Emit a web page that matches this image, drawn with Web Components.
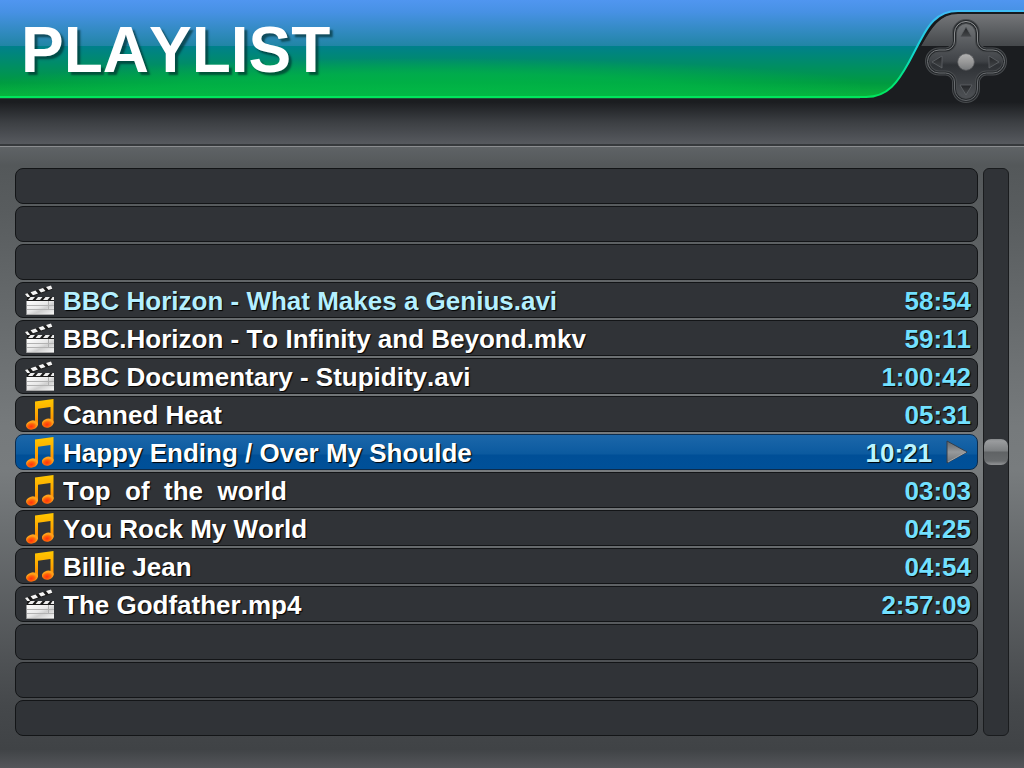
<!DOCTYPE html>
<html lang="en">
<head>
<meta charset="utf-8">
<title>Playlist</title>
<style>
html, body { height: 100%; }
body { margin: 0; background: #53575a; font-family: "Liberation Sans", Arial, sans-serif; }
</style>
</head>
<body>
<playlist-app></playlist-app>
<script>
const PAD = "M94.5 33A11.5 11.5 0 0 1 117.5 33V41A9 9 0 0 0 126.5 50H133A11.5 11.5 0 0 1 133 73H126.5A9 9 0 0 0 117.5 82V89A11.500 11.500 0 0 1 94.5 89V82A9 9 0 0 0 85.5 73H79A11.5 11.5 0 0 1 79 50H85.5A9 9 0 0 0 94.5 41Z";
const CURVE = "C28 97 38 82 49 62L59 43C66 30 74 11 98 11";

class DirectionPad extends HTMLElement {
  constructor() {
    super();
    this.attachShadow({ mode: "open" }).innerHTML = `
<style>:host{display:block;width:164px;height:108px} svg{display:block}</style>
<svg width="164" height="108" viewBox="0 0 164 108" aria-hidden="true">
  <defs>
    <linearGradient id="band" gradientUnits="userSpaceOnUse" x1="0" y1="0" x2="0" y2="98">
      <stop offset="0" stop-color="#5096f0"/><stop offset=".12" stop-color="#4791e4"/><stop offset=".47" stop-color="#2185a5"/>
      <stop offset=".47" stop-color="#00808c"/><stop offset=".85" stop-color="#009a40"/><stop offset="1" stop-color="#0bb63a"/>
    </linearGradient>
    <linearGradient id="edge" gradientUnits="userSpaceOnUse" x1="0" y1="12" x2="0" y2="97">
      <stop offset="0" stop-color="#3fbcf5"/><stop offset=".45" stop-color="#14d5d5"/><stop offset=".8" stop-color="#00e67a"/><stop offset="1" stop-color="#00e65c"/>
    </linearGradient>
    <linearGradient id="gloss" gradientUnits="userSpaceOnUse" x1="0" y1="12" x2="0" y2="46">
      <stop offset="0" stop-color="#77797c"/><stop offset="1" stop-color="#45484b"/>
    </linearGradient>
    <linearGradient id="pad" x1="0" y1="0" x2="0" y2="1">
      <stop offset="0" stop-color="#74777a"/><stop offset=".5" stop-color="#404347"/><stop offset=".55" stop-color="#2e3135"/><stop offset="1" stop-color="#505357"/>
    </linearGradient>
    <linearGradient id="ball" x1="0" y1="0" x2="0" y2="1"><stop offset="0" stop-color="#b2b2b2"/><stop offset=".5" stop-color="#989898"/><stop offset="1" stop-color="#77797b"/></linearGradient>
    <linearGradient id="rim" x1="0" y1="0" x2="0" y2="1"><stop offset="0" stop-color="#97999b"/><stop offset=".5" stop-color="#707376"/><stop offset="1" stop-color="#63666a"/></linearGradient>
    <linearGradient id="tri" x1="0" y1="0" x2="0" y2="1"><stop offset="0" stop-color="#222427"/><stop offset="1" stop-color="#45484b"/></linearGradient>
  </defs>
  <path d="M164 0H0V97H6${CURVE}H164Z" fill="url(#band)"/>
  <path d="M164 13H98C80 13 70 30 61 46H164Z" fill="url(#gloss)"/>
  <path d="M164 13H98C78 13 70 28 60 46" fill="none" stroke="#17191c" stroke-width="2"/>
  <path d="M0 97H6${CURVE}H164" fill="none" stroke="url(#edge)" stroke-width="2"/>
  <path d="${PAD}" fill="url(#pad)" stroke="#484b4e" stroke-width="5"/>
  <path d="${PAD}" fill="none" stroke="#25282b" stroke-width="3"/>
  <path d="${PAD}" fill="none" stroke="url(#rim)" stroke-width="1"/>
  <g fill="url(#tri)" stroke="#606367" stroke-width=".8">
    <path d="M106 27L112 37H100Z"/><path d="M106 95L100 85H112Z"/><path d="M72 62L82 56V68Z"/><path d="M139 62L129 56V68Z"/>
  </g>
  <circle cx="106" cy="62" r="8.300" fill="url(#ball)" stroke="#5a5c5f" stroke-width=".7"/>
</svg>`;
  }
}
customElements.define("direction-pad", DirectionPad);

class MediaHeader extends HTMLElement {
  constructor() {
    super();
    this.attachShadow({ mode: "open" }).innerHTML = `
<style>
:host{display:block}
header{display:flex;height:144px;background:linear-gradient(#1b1d20 0,#1b1d20 102px,#3c3f43 122px,#575a5f 144px);border-bottom:2px solid #36393c}
.band{flex:1;box-sizing:border-box;height:98px;padding:18px 22px 0 21px;border-bottom:2px solid #00e65c;box-shadow:0 1px #1d4a33;
 background:radial-gradient(ellipse 56% 38px at 50% 100%,#00ba48cc,#00ba4899 60%,#00ba4800),linear-gradient(#5096f0 0,#4791e4 12px,#2185a5 46px,#00808c 46px,#009a40 83px,#0bb63a 98px)}
h1{margin:0;font-size:64px;line-height:64px;font-kerning:none;color:#fff;text-shadow:3px 3px 2px rgba(0,45,45,.65)}
</style>
<header><div class="band"><h1><slot></slot></h1></div><direction-pad></direction-pad></header>`;
  }
}
customElements.define("media-header", MediaHeader);

const ICONS = {
  video: `<svg width="30" height="32" viewBox="0 0 30 32"><defs><linearGradient id="v" x1="0" y1="0" x2="1" y2="1"><stop offset="0" stop-color="#fff"/><stop offset=".45" stop-color="#e8e8e8"/><stop offset=".6" stop-color="#cfcfcf"/><stop offset="1" stop-color="#fafafa"/></linearGradient></defs>
   <path d="M0 10L26 1.500L27.500 5.500L3 14Z" fill="#1b1b1b"/>
   <path d="M5.500 8.200L10.500 6.500L13 9.500L8 11.300ZM13.500 5.600L18 4.100L20.500 7L16 8.600ZM21 3.100L26 1.500L27.300 4.800L23.500 6.100ZM0 10L2.500 9.200L5 12.600L3 14Z" fill="#f4f4f4"/>
   <rect x="2" y="13" width="27" height="5" fill="#1b1b1b"/>
   <path d="M5.500 13H10L7.500 16H3ZM13 13H17.500L15 16H10.500ZM20.500 13H25L22.500 16H18ZM27.500 13H29V16H25.500Z" fill="#eee"/>
   <rect x="1.500" y="17" width="27.500" height="14" fill="url(#v)"/>
   <path d="M2 21.500H29M23.500 17V25.500M2 25.500H29" stroke="#b2b2b2" fill="none"/><path d="M2 30.500H29" stroke="#aaa"/></svg>`,
  music: `<svg width="30" height="32" viewBox="0 0 30 32"><defs><linearGradient id="m" x1="0" y1="0" x2="0" y2="1"><stop offset="0" stop-color="#ffc800"/><stop offset=".5" stop-color="#ffab00"/><stop offset="1" stop-color="#ff8500"/></linearGradient><radialGradient id="n" cx=".4" cy=".65"><stop offset="0" stop-color="#ff3210"/><stop offset=".6" stop-color="#ff6508"/><stop offset="1" stop-color="#ffa21a"/></radialGradient></defs>
   <path d="M10 3.500L28.500 1V25H25.500V9L13 10.800V27H10Z" fill="url(#m)"/>
   <ellipse cx="7" cy="27" rx="6" ry="4.500" transform="rotate(-15 7 27)" fill="url(#n)"/>
   <ellipse cx="22.800" cy="25" rx="6" ry="4.500" transform="rotate(-15 23 25)" fill="url(#n)"/></svg>`
};

class PlaylistItem extends HTMLElement {
  connectedCallback() {
    const kind = this.getAttribute("kind");
    const playing = this.hasAttribute("selected");
    this.attachShadow({ mode: "open" }).innerHTML = `
<style>
:host{display:flex;align-items:center;box-sizing:border-box;height:36px;padding:0 6px 0 9px;border:1px solid #131517;border-radius:8px;
 background:#303337;color:#fff;font-weight:bold;font-size:26px;line-height:30px;font-kerning:none;text-shadow:1px 1px 1px #000}
:host([recent]){color:#b4f0ff}
:host([selected]){background:linear-gradient(#1c67aa 0,#0b5a9f 19px,#004f97 20px,#005098 100%);border-color:#0d2c4c}
.icon{flex:none;width:30px;height:32px;margin-right:8px}
.icon svg,.play{display:block}
.title,time{padding-top:2px}
.title{flex:1;min-width:0;white-space:pre;overflow:hidden}
time{color:#72e0ff}
:host([selected]) time{color:#b9f4ff}
.play{margin:0 3px 0 14px}
</style>
${kind ? `<span class="icon">${ICONS[kind]}</span><span class="title"><slot></slot></span><time>${this.getAttribute("length")}</time>` : ""}
${playing ? `<svg class="play" width="22" height="24" viewBox="0 0 22 24"><defs><linearGradient id="p" x1="0" y1="0" x2="0" y2="1"><stop offset="0" stop-color="#606366"/><stop offset=".5" stop-color="#97999b"/><stop offset="1" stop-color="#707376"/></linearGradient></defs><path d="M1 1L21 12L1 23Z" fill="url(#p)" stroke="#333f4d"/><path d="M2 22L20 12" stroke="#a4a6a8" fill="none"/></svg>` : ""}`;
  }
}
customElements.define("playlist-item", PlaylistItem);

class PlaylistScroller extends HTMLElement {
  constructor() {
    super();
    this.attachShadow({ mode: "open" }).innerHTML = `
<style>
:host{display:grid;grid-template-rows:1fr 26px 1fr;box-sizing:border-box;width:26px;border:1px solid #1a1c1e;border-radius:6px;background:#303337}
.thumb{grid-row:2;border-radius:7px;background:linear-gradient(#85888a 0,#9a9c9e 2px,#7c7f81 12px,#606365 13px,#686b6d 22px,#8b8d8f 25px)}
</style>
<div class="thumb"></div>`;
  }
}
customElements.define("playlist-scroller", PlaylistScroller);

class PlaylistApp extends HTMLElement {
  constructor() {
    super();
    this.attachShadow({ mode: "open" }).innerHTML = `
<style>
:host{display:flex;flex-direction:column;min-height:100%;box-sizing:border-box}
main{flex:1;display:flex;align-items:stretch;gap:5px;padding:21px 15px 32px;border-top:1px solid #8b8d90;
 background:linear-gradient(#5f6366 0,#54585a 3%,#585c5e 10%,#767a7c 45%,#787c7e 52%,#45484b 90%,#404346 97%,#54565a 100%)}
.list{flex:1;min-width:0;display:flex;flex-direction:column;gap:2px}
</style>
<media-header>PLAYLIST</media-header>
<main>
 <div class="list">
  <playlist-item></playlist-item><playlist-item></playlist-item><playlist-item></playlist-item>
  <playlist-item kind="video" recent length="58:54">BBC Horizon - What Makes a Genius.avi</playlist-item>
  <playlist-item kind="video" length="59:11">BBC.Horizon - To Infinity and Beyond.mkv</playlist-item>
  <playlist-item kind="video" length="1:00:42">BBC Documentary - Stupidity.avi</playlist-item>
  <playlist-item kind="music" length="05:31">Canned Heat</playlist-item>
  <playlist-item kind="music" selected length="10:21">Happy Ending / Over My Shoulde</playlist-item>
  <playlist-item kind="music" length="03:03">Top  of  the  world</playlist-item>
  <playlist-item kind="music" length="04:25">You Rock My World</playlist-item>
  <playlist-item kind="music" length="04:54">Billie Jean</playlist-item>
  <playlist-item kind="video" length="2:57:09">The Godfather.mp4</playlist-item>
  <playlist-item></playlist-item><playlist-item></playlist-item><playlist-item></playlist-item>
 </div>
 <playlist-scroller></playlist-scroller>
</main>`;
  }
}
customElements.define("playlist-app", PlaylistApp);
</script>
</body>
</html>
